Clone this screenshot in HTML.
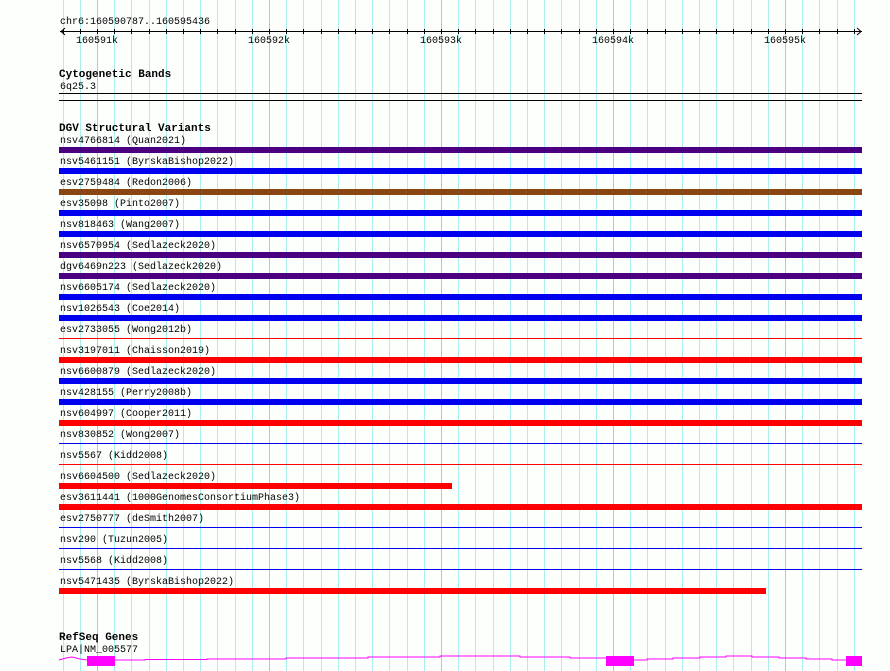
<!DOCTYPE html>
<html><head><meta charset="utf-8"><style>
html,body{margin:0;padding:0;background:#fdfffd;}
svg{display:block;}
text{font-family:"Liberation Mono",monospace;font-size:10px;fill:#000;transform:translateY(-1px);}
.b{font-weight:bold;font-size:11px;}
</style></head><body>
<svg width="890" height="671" viewBox="0 0 890 671" xmlns="http://www.w3.org/2000/svg">
<path stroke="#aaeeee" stroke-width="1" fill="none" d="M63.5 0V671M80.5 0V671M114.5 0V671M131.5 0V671M149.5 0V671M166.5 0V671M183.5 0V671M200.5 0V671M217.5 0V671M235.5 0V671M252.5 0V671M286.5 0V671M303.5 0V671M321.5 0V671M338.5 0V671M355.5 0V671M372.5 0V671M389.5 0V671M407.5 0V671M424.5 0V671M458.5 0V671M475.5 0V671M493.5 0V671M510.5 0V671M527.5 0V671M544.5 0V671M561.5 0V671M579.5 0V671M596.5 0V671M630.5 0V671M647.5 0V671M665.5 0V671M682.5 0V671M699.5 0V671M716.5 0V671M733.5 0V671M751.5 0V671M768.5 0V671M802.5 0V671M819.5 0V671M837.5 0V671M854.5 0V671"/>
<path stroke="#99ccee" stroke-width="1" fill="none" d="M97.5 0V671M269.5 0V671M441.5 0V671M613.5 0V671M785.5 0V671"/>
<path stroke="#000" stroke-width="1" fill="none" d="M63.5 29V34M80.5 29V34M97.5 29V34M114.5 29V34M131.5 29V34M149.5 29V34M166.5 29V34M183.5 29V34M200.5 29V34M217.5 29V34M235.5 29V34M252.5 29V34M269.5 29V34M286.5 29V34M303.5 29V34M321.5 29V34M338.5 29V34M355.5 29V34M372.5 29V34M389.5 29V34M407.5 29V34M424.5 29V34M441.5 29V34M458.5 29V34M475.5 29V34M493.5 29V34M510.5 29V34M527.5 29V34M544.5 29V34M561.5 29V34M579.5 29V34M596.5 29V34M613.5 29V34M630.5 29V34M647.5 29V34M665.5 29V34M682.5 29V34M699.5 29V34M716.5 29V34M733.5 29V34M751.5 29V34M768.5 29V34M785.5 29V34M802.5 29V34M819.5 29V34M837.5 29V34M854.5 29V34"/>
<text x="60" y="25">chr6:160590787..160595436</text>
<line x1="60" y1="31.5" x2="862" y2="31.5" stroke="#000"/>
<polyline points="65,28 61,31.5 65,35" fill="none" stroke="#000"/>
<polyline points="857,28 861,31.5 857,35" fill="none" stroke="#000"/>
<text x="76" y="44">160591k</text>
<text x="248" y="44">160592k</text>
<text x="420" y="44">160593k</text>
<text x="592" y="44">160594k</text>
<text x="764" y="44">160595k</text>
<text class="b" x="59" y="78">Cytogenetic Bands</text>
<text x="60" y="90">6q25.3</text>
<line x1="59" y1="93.5" x2="862" y2="93.5" stroke="#000"/>
<line x1="59" y1="100.5" x2="862" y2="100.5" stroke="#000"/>
<text class="b" x="59" y="132">DGV Structural Variants</text>

<text x="60" y="144">nsv4766814 (Quan2021)</text><rect x="59" y="147" width="803" height="6" fill="#4b0082"/>
<text x="60" y="165">nsv5461151 (ByrskaBishop2022)</text><rect x="59" y="168" width="803" height="6" fill="#0000ee"/>
<text x="60" y="186">esv2759484 (Redon2006)</text><rect x="59" y="189" width="803" height="6" fill="#8b4513"/>
<text x="60" y="207">esv35098 (Pinto2007)</text><rect x="59" y="210" width="803" height="6" fill="#0000ee"/>
<text x="60" y="228">nsv818463 (Wang2007)</text><rect x="59" y="231" width="803" height="6" fill="#0000ee"/>
<text x="60" y="249">nsv6570954 (Sedlazeck2020)</text><rect x="59" y="252" width="803" height="6" fill="#4b0082"/>
<text x="60" y="270">dgv6469n223 (Sedlazeck2020)</text><rect x="59" y="273" width="803" height="6" fill="#4b0082"/>
<text x="60" y="291">nsv6605174 (Sedlazeck2020)</text><rect x="59" y="294" width="803" height="6" fill="#0000ee"/>
<text x="60" y="312">nsv1026543 (Coe2014)</text><rect x="59" y="315" width="803" height="6" fill="#0000ee"/>
<text x="60" y="333">esv2733055 (Wong2012b)</text><rect x="59" y="338" width="803" height="1" fill="#ff0000"/>
<text x="60" y="354">nsv3197011 (Chaisson2019)</text><rect x="59" y="357" width="803" height="6" fill="#ff0000"/>
<text x="60" y="375">nsv6600879 (Sedlazeck2020)</text><rect x="59" y="378" width="803" height="6" fill="#0000ee"/>
<text x="60" y="396">nsv428155 (Perry2008b)</text><rect x="59" y="399" width="803" height="6" fill="#0000ee"/>
<text x="60" y="417">nsv604997 (Cooper2011)</text><rect x="59" y="420" width="803" height="6" fill="#ff0000"/>
<text x="60" y="438">nsv830852 (Wong2007)</text><rect x="59" y="443" width="803" height="1" fill="#0000ee"/>
<text x="60" y="459">nsv5567 (Kidd2008)</text><rect x="59" y="464" width="803" height="1" fill="#ff0000"/>
<text x="60" y="480">nsv6604500 (Sedlazeck2020)</text><rect x="59" y="483" width="393" height="6" fill="#ff0000"/>
<text x="60" y="501">esv3611441 (1000GenomesConsortiumPhase3)</text><rect x="59" y="504" width="803" height="6" fill="#ff0000"/>
<text x="60" y="522">esv2750777 (deSmith2007)</text><rect x="59" y="527" width="803" height="1" fill="#0000ee"/>
<text x="60" y="543">nsv290 (Tuzun2005)</text><rect x="59" y="548" width="803" height="1" fill="#0000ee"/>
<text x="60" y="564">nsv5568 (Kidd2008)</text><rect x="59" y="569" width="803" height="1" fill="#0000ee"/>
<text x="60" y="585">nsv5471435 (ByrskaBishop2022)</text><rect x="59" y="588" width="707" height="6" fill="#ff0000"/>

<text class="b" x="59" y="641">RefSeq Genes</text>
<text x="60" y="653">LPA|NM_005577</text>
<polyline fill="none" stroke="#ff00ff" stroke-width="1" points="59,660 66,658 72,657 80,659 87,660 115,660 145,660 145,659.5 207,659.5 207,659 286,659 286,658 368,658 368,657 440,657 440,656 520,656 520,657 570,657 570,658 606,658 634,660 647,660 647,659 673,659 673,658 700,658 700,657 726,657 726,656 752,656 752,657 779,657 779,658 806,658 806,659 832,659 832,660 846,660"/>
<rect x="87" y="656" width="28" height="10" fill="#ff00ff"/>
<rect x="606" y="656" width="28" height="10" fill="#ff00ff"/>
<rect x="846" y="656" width="16" height="10" fill="#ff00ff"/>
</svg>
</body></html>
